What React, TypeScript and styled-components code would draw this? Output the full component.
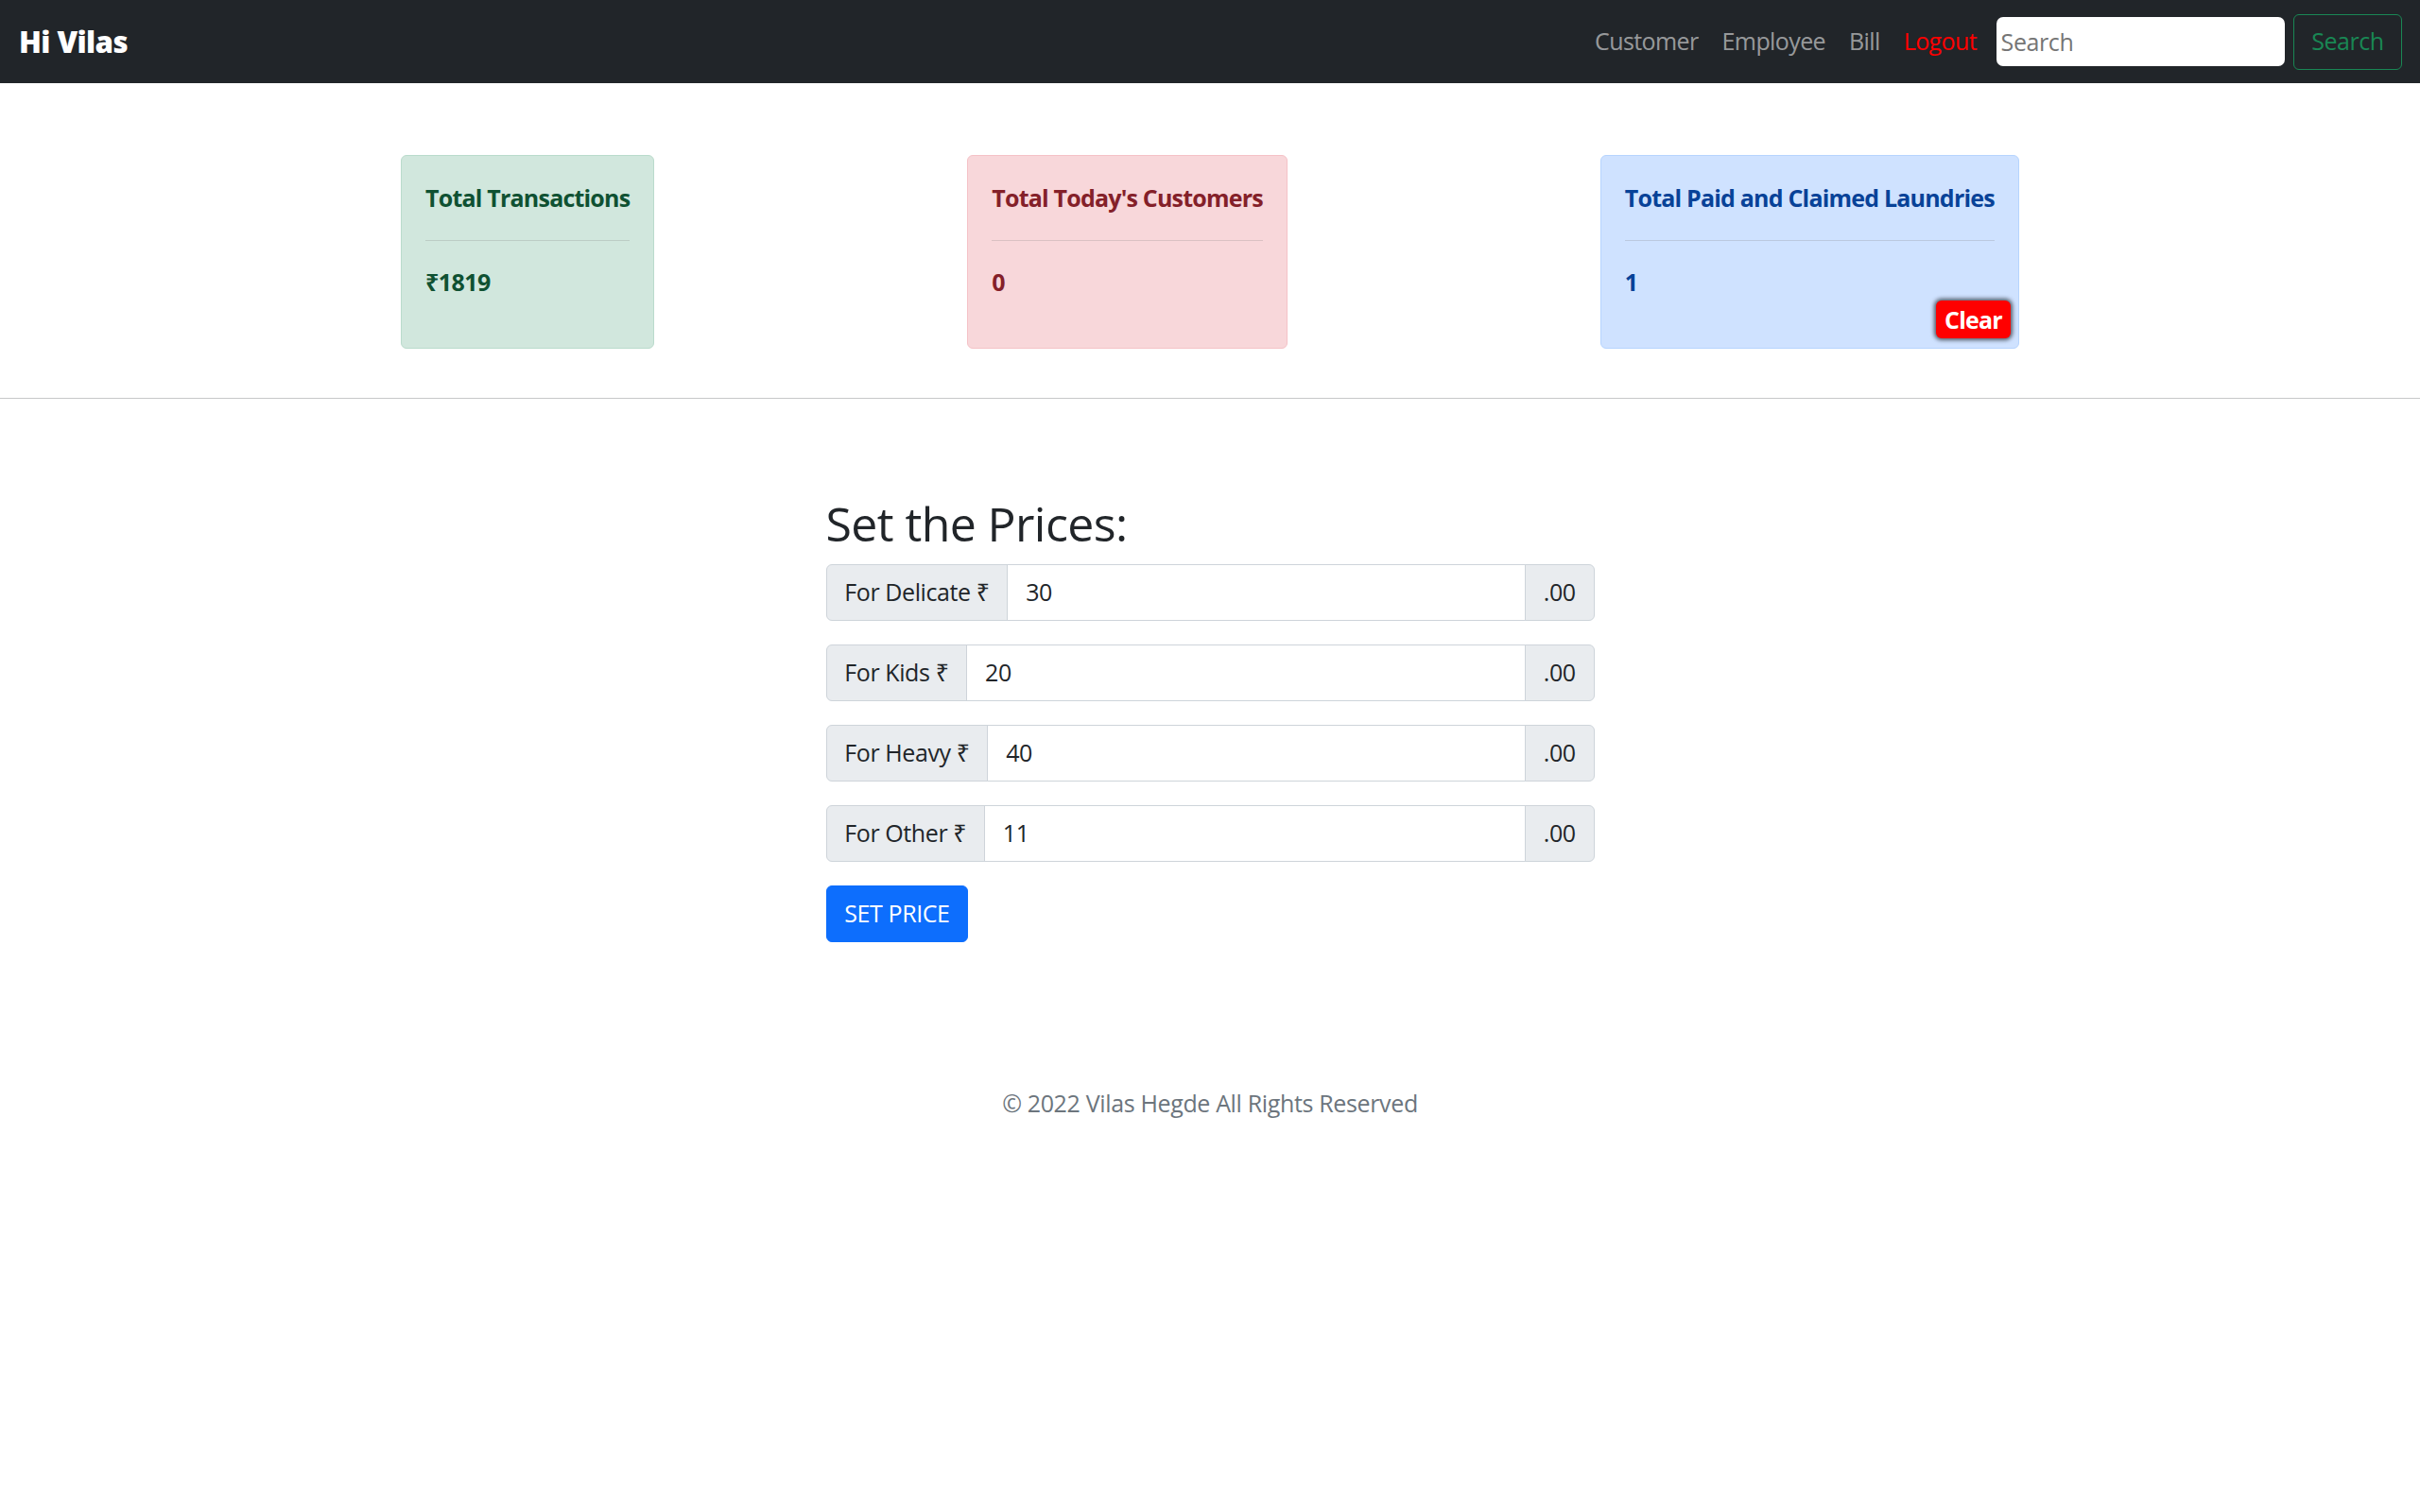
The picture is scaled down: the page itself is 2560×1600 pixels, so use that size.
import React from "react";
import styled, { createGlobalStyle } from "styled-components";

const FONT = `"Open Sans", "Noto Sans", "DejaVu Sans", sans-serif`;

const GlobalStyle = createGlobalStyle`
  html, body {
    margin: 0;
    padding: 0;
    background: #ffffff;
  }
  body {
    font-family: ${FONT};
    font-size: 25px;
    line-height: 1.5;
    letter-spacing: -0.4px;
    color: #212529;
  }
  *, *::before, *::after { box-sizing: border-box; }
`;

const NavBar = styled.nav`
  background: #212529;
  height: 88px;
  padding: 0 18.75px 0 20px;
  display: flex;
  align-items: center;
  justify-content: space-between;
`;

const Brand = styled.a`
  color: #ffffff;
  font-weight: 800;
  font-size: 31.25px;
  line-height: 1.5;
  letter-spacing: -0.6px;
  text-decoration: none;
`;

const NavRight = styled.div`
  display: flex;
  align-items: center;
`;

const NavList = styled.ul`
  display: flex;
  list-style: none;
  margin: 0;
  padding: 0;
`;

const NavLink = styled.a<{ $danger?: boolean }>`
  display: block;
  padding: 0 12.5px;
  font-size: 25px;
  line-height: 1.5;
  letter-spacing: -0.6px;
  color: ${(p) => (p.$danger ? "#ff0000" : "rgba(255,255,255,0.55)")};
  text-decoration: none;
`;

const SearchForm = styled.form`
  display: flex;
  align-items: center;
  margin-left: 8px;
`;

const SearchInput = styled.input`
  width: 305px;
  height: 52px;
  border: none;
  border-radius: 7px;
  padding: 0 5px;
  margin-right: 9px;
  font-family: ${FONT};
  font-size: 25px;
  letter-spacing: -0.4px;
  color: #212529;
  background: #ffffff;
  outline: none;
  &::placeholder { color: #757575; }
`;

const OutlineButton = styled.button`
  height: 59px;
  padding: 0 18.75px;
  border: 1.5px solid #198754;
  border-radius: 6px;
  background: transparent;
  color: #198754;
  font-family: ${FONT};
  font-size: 25px;
  letter-spacing: -0.5px;
  line-height: 1.5;
`;

const CardRow = styled.section`
  display: flex;
  justify-content: center;
  align-items: flex-start;
  gap: 331px;
  padding: 76px 0 52px;
`;

const tones = {
  success: { bg: "#d1e7dd", border: "#badbcc", color: "#0f5132" },
  danger: { bg: "#f8d7da", border: "#f5c2c7", color: "#842029" },
  primary: { bg: "#cfe2ff", border: "#b6d4fe", color: "#084298" },
};

type Tone = keyof typeof tones;

const Card = styled.div<{ $tone: Tone }>`
  position: relative;
  background: ${(p) => tones[p.$tone].bg};
  border: 1.5px solid ${(p) => tones[p.$tone].border};
  color: ${(p) => tones[p.$tone].color};
  border-radius: 6px;
  padding: 26px 25px 0;
`;

const CardTitle = styled.p`
  margin: 0;
  font-weight: 700;
  font-size: 25px;
  line-height: 1.5;
  letter-spacing: -0.8px;
  white-space: nowrap;
`;

const CardRule = styled.hr`
  margin: 25px 0;
  border: 0;
  border-top: 1.5px solid currentColor;
  opacity: 0.25;
`;

const CardValue = styled.p`
  margin: 0 0 51px;
  font-weight: 700;
  font-size: 25px;
  line-height: 1.5;
  letter-spacing: -0.6px;
`;

const ClearButton = styled.button`
  position: absolute;
  right: 8px;
  bottom: 10.5px;
  height: 40px;
  padding: 0 9px;
  border: none;
  border-radius: 6px;
  background: #ff0000;
  color: #ffffff;
  font-family: ${FONT};
  font-weight: 700;
  font-size: 25px;
  letter-spacing: -0.8px;
  line-height: 1.2;
  box-shadow: 0 0 4px 2px rgba(0, 0, 0, 0.6);
`;

const PageRule = styled.hr`
  margin: 0;
  border: 0;
  border-top: 1.5px solid rgba(33, 37, 41, 0.25);
`;

const PriceForm = styled.form`
  width: 813px;
  margin: 102px auto 0;
`;

const Heading = styled.h2`
  margin: 0 0 12.5px;
  font-size: 50px;
  font-weight: 500;
  line-height: 1.2;
  letter-spacing: -0.6px;
  color: #212529;
`;

const InputGroup = styled.div`
  display: flex;
  align-items: stretch;
  height: 60px;
  margin-bottom: 25px;
`;

const Addon = styled.span<{ $side: "left" | "right" }>`
  display: flex;
  align-items: center;
  padding: 0 18.75px;
  background: #e9ecef;
  border: 1px solid #ced4da;
  color: #212529;
  font-size: 25px;
  line-height: 1.5;
  white-space: nowrap;
  border-radius: ${(p) => (p.$side === "left" ? "6px 0 0 6px" : "0 6px 6px 0")};
  margin-left: ${(p) => (p.$side === "right" ? "-1px" : "0")};
`;

const PriceInput = styled.input`
  flex: 1;
  min-width: 0;
  margin-left: -1px;
  padding: 0 18.75px;
  border: 1px solid #ced4da;
  background: #ffffff;
  color: #212529;
  font-family: ${FONT};
  font-size: 25px;
  letter-spacing: -0.4px;
  line-height: 1.5;
  outline: none;
`;

const PrimaryButton = styled.button`
  height: 60px;
  padding: 0 18.75px;
  border: 1px solid #0d6efd;
  border-radius: 6px;
  background: #0d6efd;
  color: #ffffff;
  font-family: ${FONT};
  font-size: 25px;
  letter-spacing: -0.4px;
  line-height: 1.5;
  text-transform: uppercase;
`;

const Footer = styled.footer`
  margin-top: 152px;
  text-align: center;
  color: #6c757d;
  font-size: 25px;
  line-height: 1.5;
  letter-spacing: -0.35px;
`;

const prices = [
  { label: "For Delicate ₹", value: "30" },
  { label: "For Kids ₹", value: "20" },
  { label: "For Heavy ₹", value: "40" },
  { label: "For Other ₹", value: "11" },
];

export default function App() {
  return (
    <>
      <GlobalStyle />
      <NavBar>
        <Brand href="#">Hi Vilas</Brand>
        <NavRight>
          <NavList>
            <li><NavLink href="#">Customer</NavLink></li>
            <li><NavLink href="#">Employee</NavLink></li>
            <li><NavLink href="#">Bill</NavLink></li>
            <li><NavLink href="#" $danger>Logout</NavLink></li>
          </NavList>
          <SearchForm onSubmit={(e) => e.preventDefault()}>
            <SearchInput placeholder="Search" />
            <OutlineButton type="submit">Search</OutlineButton>
          </SearchForm>
        </NavRight>
      </NavBar>

      <CardRow>
        <Card $tone="success">
          <CardTitle>Total Transactions</CardTitle>
          <CardRule />
          <CardValue>₹1819</CardValue>
        </Card>
        <Card $tone="danger">
          <CardTitle>Total Today's Customers</CardTitle>
          <CardRule />
          <CardValue>0</CardValue>
        </Card>
        <Card $tone="primary">
          <CardTitle>Total Paid and Claimed Laundries</CardTitle>
          <CardRule />
          <CardValue>1</CardValue>
          <ClearButton type="button">Clear</ClearButton>
        </Card>
      </CardRow>

      <PageRule />

      <PriceForm onSubmit={(e) => e.preventDefault()}>
        <Heading>Set the Prices:</Heading>
        {prices.map((p) => (
          <InputGroup key={p.label}>
            <Addon $side="left">{p.label}</Addon>
            <PriceInput defaultValue={p.value} />
            <Addon $side="right">.00</Addon>
          </InputGroup>
        ))}
        <PrimaryButton type="submit">Set Price</PrimaryButton>
      </PriceForm>

      <Footer>© 2022 Vilas Hegde All Rights Reserved</Footer>
    </>
  );
}
